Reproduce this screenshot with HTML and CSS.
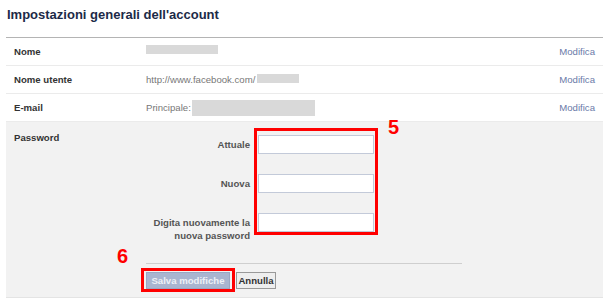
FILE: index.html
```html
<!DOCTYPE html>
<html lang="it">
<head>
    <meta charset="UTF-8">
    <title>Impostazioni generali dell'account</title>
    <link rel="stylesheet" href="styles.css">
</head>
<body>
    <div class="page">
        <h2 class="title">Impostazioni generali dell'account</h2>

        <ul class="settings">
            <li class="row">
                <span class="label">Nome</span>
                <span class="value"><span class="hidden hidden-name"></span></span>
                <a class="edit" href="#">Modifica</a>
            </li>
            <li class="row">
                <span class="label">Nome utente</span>
                <span class="value">http://www.facebook.com/<span class="hidden hidden-user"></span></span>
                <a class="edit" href="#">Modifica</a>
            </li>
            <li class="row">
                <span class="label">E-mail</span>
                <span class="value">Principale:<span class="hidden hidden-mail"></span></span>
                <a class="edit" href="#">Modifica</a>
            </li>

            <!-- riga aperta: cambio password -->
            <li class="row open">
                <span class="label">Password</span>
                <form class="pw-form" onsubmit="return false">
                    <div class="fields">
                        <label for="old">Attuale</label>
                        <input type="password" id="old">

                        <label for="new">Nuova</label>
                        <input type="password" id="new">

                        <label for="confirm">Digita nuovamente la nuova password</label>
                        <input type="password" id="confirm">
                    </div>

                    <div class="actions">
                        <button class="btn btn-save" type="submit">Salva modifiche</button>
                        <button class="btn btn-cancel" type="button">Annulla</button>
                    </div>

                    <!-- annotazioni -->
                    <span class="mark mark-fields"></span>
                    <span class="step step-5">5</span>
                    <span class="mark mark-save"></span>
                    <span class="step step-6">6</span>
                </form>
            </li>
        </ul>
    </div>
</body>
</html>
```

FILE: styles.css
```css
body {
    margin: 0;
    background: #fff;
    font-family: 'Liberation Sans', Arial, sans-serif;
    color: #333;
}
.page {
    padding: 0 7px 0 6px;
}
.title {
    margin: 0;
    padding: 7px 0 14px 1px;
    font-size: 13px;
    line-height: 16px;
    font-weight: bold;
    color: #1c2a47;
}
.settings {
    list-style: none;
    margin: 0;
    padding: 0;
    border-top: 1px solid #b4b4b4;
}
.row {
    display: grid;
    grid-template-columns: 140px 1fr auto;
    align-items: center;
    height: 27px;
    border-bottom: 1px solid #ebebeb;
    font-size: 9.6px;
    line-height: 13px;
}
.label {
    padding-left: 8px;
    font-weight: bold;
    color: #333;
}
.value {
    display: flex;
    align-items: center;
    color: #777;
}
.hidden {
    display: inline-block;
    background: #d9d9d9;
}
.hidden-name {
    width: 72px;
    height: 9px;
    margin-top: -5px;
}
.hidden-user {
    width: 42px;
    height: 9px;
    margin-left: 2px;
    margin-top: -2px;
}
.hidden-mail {
    width: 123px;
    height: 16px;
    margin-left: 1px;
}
.edit {
    padding-right: 8px;
    color: #6a7aa8;
    text-decoration: none;
}

/* password */
.row.open {
    height: auto;
    align-items: start;
    background: #f2f2f2;
    border-bottom-color: #e4e4e4;
}
.row.open .label {
    padding-top: 9px;
}
.pw-form {
    position: relative;
    grid-column: 2 / 4;
    padding: 13px 0 8px;
}
.fields {
    display: grid;
    grid-template-columns: 104px 116px;
    column-gap: 8px;
    row-gap: 20px;
    align-items: start;
}
.fields label {
    padding-top: 3px;
    text-align: right;
    font-weight: bold;
    color: #555;
}
.fields input {
    box-sizing: border-box;
    width: 116px;
    height: 19px;
    margin: 0;
    padding: 2px;
    border: 1px solid #c3cad9;
    background: #fff;
}
.actions {
    display: flex;
    gap: 6px;
    width: 316px;
    margin-top: 21px;
    padding-top: 8px;
    border-top: 1px solid #cfcfcf;
}
.btn {
    box-sizing: border-box;
    height: 17px;
    margin: 0;
    padding: 0;
    font-family: inherit;
    font-size: 9.6px;
    font-weight: bold;
    white-space: nowrap;
    text-align: center;
    cursor: pointer;
}
.btn-save {
    width: 84px;
    background: #a9b5d0;
    border: 1px solid #9aa6c3;
    color: #eef1f7;
}
.btn-cancel {
    width: 40px;
    background: #eeeeee;
    border: 1px solid #999;
    color: #333;
}
.mark {
    position: absolute;
    border: 3px solid #f00;
    box-sizing: border-box;
}
.mark-fields {
    left: 108px;
    top: 6px;
    width: 124px;
    height: 107px;
}
.mark-save {
    left: -5px;
    top: 146px;
    width: 94px;
    height: 24px;
}
.step {
    position: absolute;
    font-size: 20px;
    line-height: 20px;
    font-weight: bold;
    color: #f00;
}
.step-5 {
    left: 242px;
    top: -5px;
}
.step-6 {
    left: -29px;
    top: 124px;
}
```
